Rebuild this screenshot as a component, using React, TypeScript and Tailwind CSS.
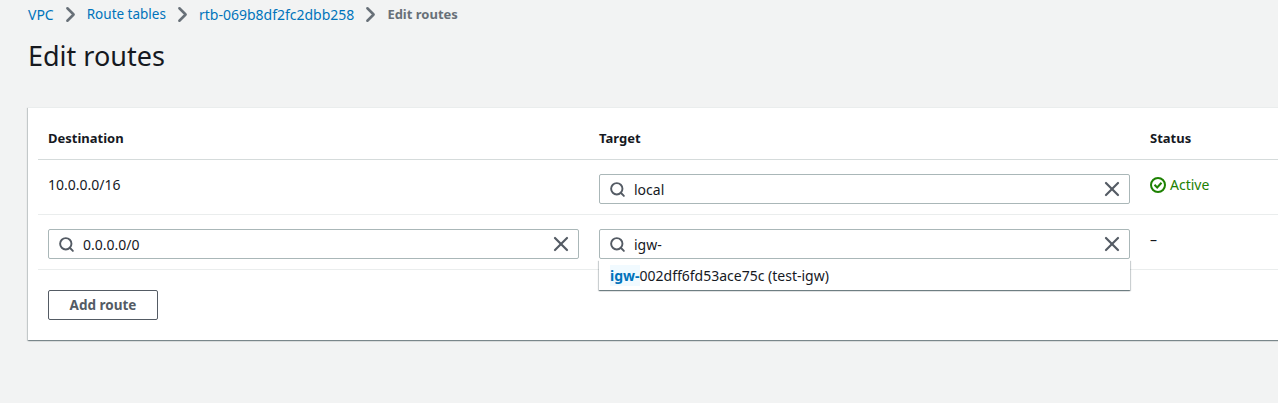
import { Search, X, ChevronRight } from 'lucide-react'

function Crumb({ label, small }: { label: string; small?: boolean }) {
  return (
    <>
      <a className={small ? 'text-[13.5px] text-[#0073bb]' : 'text-[#0073bb]'}>{label}</a>
      <ChevronRight className="mx-[4px] size-[25px] text-[#687078]" strokeWidth={2.4} />
    </>
  )
}

function TokenInput({ value }: { value: string }) {
  return (
    <div className="flex h-[30px] w-[531px] items-center rounded-[2px] border border-[#aab7b8] bg-white pl-[9px] pr-[5px] text-[14px] text-[#16191f]">
      <Search className="size-[17px] text-[#545b64]" strokeWidth={2.7} />
      <span className="ml-[8px] flex-1">{value}</span>
      <X className="size-[24px] text-[#545b64]" strokeWidth={2.2} />
    </div>
  )
}

export default function App() {
  return (
    <div className="h-[403px] w-[1278px] overflow-hidden bg-[#f2f3f3] pl-[28px] font-['Noto_Sans','Open_Sans',sans-serif] text-[13px] text-[#16191f]">
      <nav className="flex h-[29px] items-center text-[14px]">
        <Crumb label="VPC" />
        <Crumb label="Route tables" small />
        <Crumb label="rtb-069b8df2fc2dbb258" />
        <span className="text-[13px] font-bold text-[#687078]">Edit routes</span>
      </nav>
      <h1 className="mt-[9px] text-[27px] leading-[36px] font-normal">Edit routes</h1>
      <section className="mt-[33px] h-[233px] w-[1300px] border-t border-[#eaeded] bg-white pl-[10px] shadow-[0_1px_1px_0_rgba(0,28,36,0.3),1px_1px_1px_0_rgba(0,28,36,0.15),-1px_1px_1px_0_rgba(0,28,36,0.15)]">
        <div className="grid h-[52px] grid-cols-[551px_551px_1fr] items-center border-b border-[#d5dbdb] pt-[11px] font-bold">
          <div className="pl-[10px]">Destination</div>
          <div className="pl-[10px]">Target</div>
          <div className="pl-[10px]">Status</div>
        </div>
        <div className="grid h-[55px] grid-cols-[551px_551px_1fr] items-center border-b border-[#eaeded]">
          <div className="pl-[10px] pb-[6px] text-[14px]">10.0.0.0/16</div>
          <div className="pl-[10px] pt-[4px]"><TokenInput value="local" /></div>
          <div className="flex items-center pl-[10px] pb-[5px] text-[14px] text-[#1d8102]">
            <svg viewBox="0 0 16 16" className="mr-[4px] size-[16px]" fill="none" stroke="currentColor" strokeWidth="2">
              <circle cx="8" cy="8" r="7" />
              <path d="M4.5 7.8 7.2 10.5 11.5 5.8" />
            </svg>
            Active
          </div>
        </div>
        <div className="grid h-[55px] grid-cols-[551px_551px_1fr] items-center border-b border-[#eaeded]">
          <div className="pl-[10px] pt-[4px]"><TokenInput value="0.0.0.0/0" /></div>
          <div className="relative pl-[10px] pt-[4px]">
            <TokenInput value="igw-" />
            <div className="absolute top-[35px] left-[10px] flex h-[30px] w-[531px] items-center bg-white pl-[11px] text-[14px] shadow-[0_1px_1px_0_rgba(0,28,36,0.4),1px_1px_1px_0_rgba(0,28,36,0.15),-1px_1px_1px_0_rgba(0,28,36,0.15)]">
              <span className="bg-[#f1faff] font-bold text-[#0073bb]">igw-</span>
              <span>002dff6fd53ace75c (test-igw)</span>
            </div>
          </div>
          <div className="pl-[10px] pb-[5px] text-[14px]">–</div>
        </div>
        <div className="pt-[20px] pl-[10px]">
          <button className="h-[30px] w-[110px] rounded-[2px] border border-[#545b64] bg-white text-[13.5px] font-bold text-[#545b64]">Add route</button>
        </div>
      </section>
    </div>
  )
}
